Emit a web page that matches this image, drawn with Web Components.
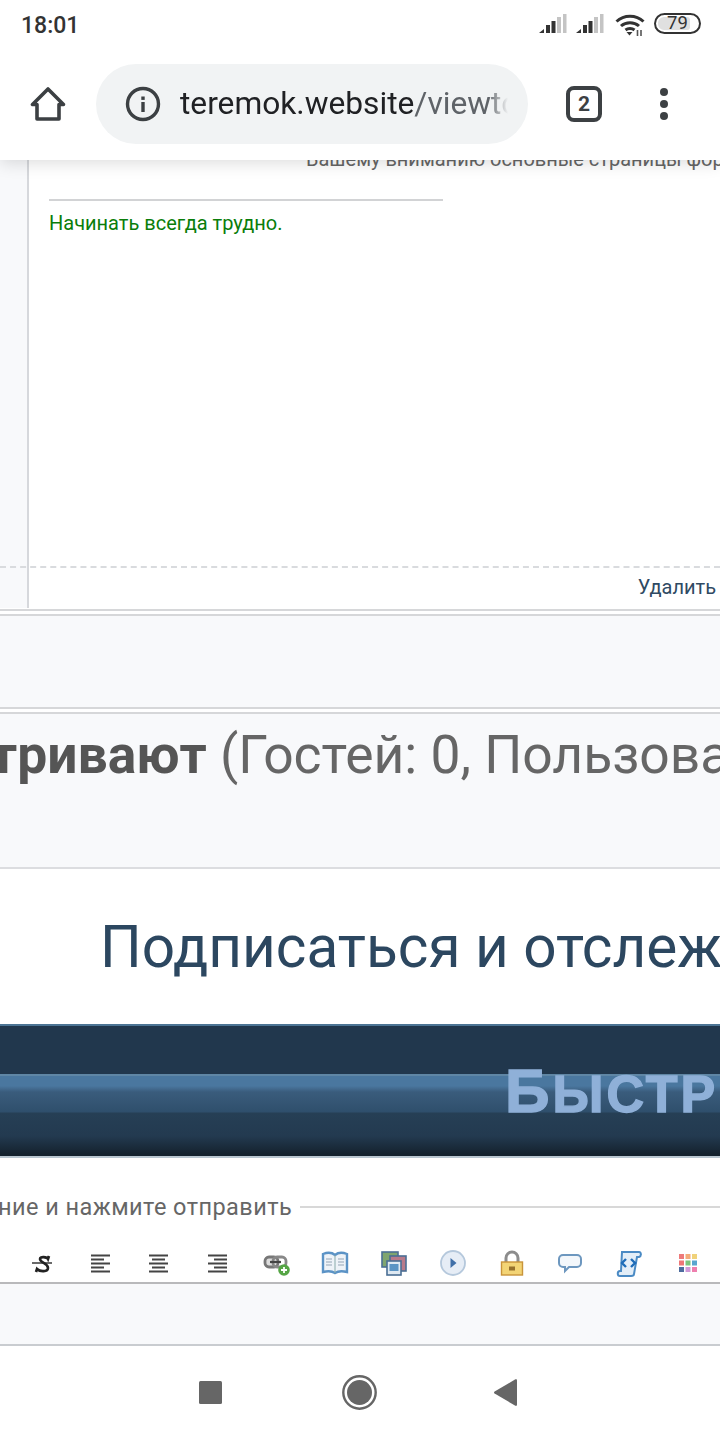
<!DOCTYPE html>
<html lang="ru">
<head>
<meta charset="utf-8">
<title>teremok.website</title>
<style>
  html, body { margin: 0; padding: 0; background: #fff; }
  body { width: 720px; height: 1440px; overflow: hidden; font-family: Roboto, "Liberation Sans", sans-serif; display: flex; flex-direction: column; }
</style>
</head>
<body>
<status-bar></status-bar>
<browser-bar></browser-bar>
<post-panel></post-panel>
<stats-band></stats-band>
<subscribe-row></subscribe-row>
<quick-banner>Быстр</quick-banner>
<editor-box></editor-box>
<nav-bar></nav-bar>

<script>
// small helper, every element just sets its shadow html once
class Base extends HTMLElement {
  constructor() {
    super();
    this.attachShadow({ mode: 'open' });
  }
  connectedCallback() {
    this.shadowRoot.innerHTML = this.markup();
  }
}

const signal = `
  <svg width="28" height="19" viewBox="0 0 28 19" style="margin-top:-3px">
    <path d="M0 19l5-4v4z" fill="#333"/>
    <rect x="7" y="11" width="4" height="8" fill="#333"/>
    <rect x="12.500" y="7" width="4" height="12" fill="#333"/>
    <rect x="18" y="3" width="4" height="16" fill="#c4c4c4"/>
    <rect x="24" y="0" width="3.500" height="19" fill="#c4c4c4"/>
  </svg>`;

class StatusBar extends Base {
  markup() {
    return `<style>
      :host { display: flex; align-items: center; height: 50px; padding: 0 19px 0 21px; flex: none; background: #fff; }
      .time { font: 500 23px/1 Roboto, sans-serif; color: #333; margin-top: 1px; }
      .icons { margin-left: auto; display: flex; align-items: center; gap: 9px; }
      .batt { width: 47px; height: 21px; box-sizing: border-box; border: 2px solid #333; border-radius: 11px; padding: 2px; position: relative; margin: -3px 0 0 0; }
      .fill { background: #e0e0e0; height: 100%; width: 82%; border-radius: 6px 3px 3px 6px; }
      .batt span { position: absolute; inset: 0; text-align: center; font: 400 18.500px/17px Roboto, sans-serif; color: #333; }
    </style>
    <div class="time">18:01</div>
    <div class="icons">
      ${signal}${signal}
      <svg width="30" height="24" viewBox="0 0 30 24" style="margin-left:2px">
        <g fill="none" stroke="#333" stroke-width="3">
          <path d="M1.500 8.500c7.500-7 19.500-7 27 0"/>
          <path d="M6 13c5-4.500 13-4.500 18 0"/>
          <path d="M10.500 17c2.500-2 6.500-2 9 0"/>
        </g>
        <path d="M11.500 19h6l-3 3.500z" fill="#333"/>
        <path d="M22.500 17v6M26 17v6" stroke="#555" stroke-width="1.600"/>
      </svg>
      <div class="batt"><div class="fill"></div><span>79</span></div>
    </div>`;
  }
}

class BrowserBar extends Base {
  markup() {
    return `<style>
      :host { display: flex; align-items: center; height: 110px; flex: none; background: #fff; position: relative; z-index: 2; box-shadow: 0 3px 16px rgba(0,0,0,.14); clip-path: inset(0 0 -30px 0); }
      .home { width: 36px; height: 36px; margin: -2px 0 0 30px; flex: none; }
      .pill { width: 432px; height: 80px; margin-left: 30px; margin-top: -2px; border-radius: 40px; background: #f1f3f4; display: flex; align-items: center; flex: none; box-sizing: border-box; padding: 0 20px 0 29px; }
      .url { font: 400 31.700px/1 Roboto, sans-serif; color: #202124; margin-left: 19px; white-space: nowrap; overflow: hidden; flex: 1; -webkit-mask-image: linear-gradient(90deg, #000 94%, transparent); mask-image: linear-gradient(90deg, #000 94%, transparent); }
      .url span { color: #5f6368; }
      .tabs { width: 36px; height: 36px; box-sizing: border-box; border: 4px solid #3c4043; border-radius: 8px; margin-left: 38px; margin-top: -2px; flex: none; display: flex; align-items: center; justify-content: center; font: 700 21px/1 Roboto, sans-serif; color: #3c4043; }
      .dots { margin-left: 58px; margin-top: -2px; display: flex; flex-direction: column; gap: 4px; flex: none; }
      .dots i { width: 8px; height: 8px; border-radius: 50%; background: #3c4043; display: block; }
    </style>
    <svg class="home" viewBox="0 0 36 36" fill="none" stroke="#3c4043" stroke-width="3.600" stroke-linejoin="round">
      <path d="M18 3 2.500 18.500H7V33h22V18.500h4.500z"/>
    </svg>
    <div class="pill">
      <svg width="36" height="36" viewBox="0 0 36 36" style="flex:none">
        <circle cx="18" cy="18" r="15.500" fill="none" stroke="#3c4043" stroke-width="3.400"/>
        <rect x="16.300" y="16" width="3.400" height="10" fill="#3c4043"/>
        <rect x="16.300" y="10.500" width="3.400" height="3.400" fill="#3c4043"/>
      </svg>
      <div class="url">teremok.website<span>/viewtopic.php</span></div>
    </div>
    <div class="tabs">2</div>
    <div class="dots"><i></i><i></i><i></i></div>`;
  }
}

class PostPanel extends Base {
  markup() {
    return `<style>
      :host { display: grid; grid-template-columns: 29px minmax(0, 1fr); grid-template-rows: 408px 40px; flex: none; background: #fff; font-family: Roboto, sans-serif; overflow: hidden; }
      .side { background: #f8f9fb; border-right: 2px solid #d6d8dc; grid-row: 1 / 3; grid-column: 1; }
      .dash { grid-row: 1; grid-column: 1 / -1; align-self: end; border-bottom: 2px dashed #d9dbde; }
      .body { grid-row: 1; grid-column: 2; padding-left: 20px; }
      .cut { margin: -12px 0 0 257px; font-size: 20px; line-height: 22px; color: #666; white-space: nowrap; height: 22px; }
      hr { width: 394px; margin: 29px 0 0; border: 0; border-top: 2px solid #d2d3d5; }
      .green { color: #0a7d0a; font-size: 20px; line-height: 22px; margin-top: 11px; }
      .foot { grid-row: 2; grid-column: 2; text-align: right; padding-right: 4px; font-size: 20px; line-height: 38px; color: #2f4a63; }
    </style>
    <div class="side"></div>
    <div class="dash"></div>
    <div class="body">
      <div class="cut">Вашему вниманию основные страницы форума</div>
      <hr>
      <div class="green">Начинать всегда трудно.</div>
    </div>
    <div class="foot">Удалить</div>`;
  }
}

class StatsBand extends Base {
  markup() {
    return `<style>
      :host { display: block; flex: none; background: #f8f9fb; font-family: Roboto, sans-serif; overflow: hidden; }
      .rule { height: 2px; background: #d6d7d9; }
      .gap { height: 3px; background: #fff; }
      .gap.thin { height: 1px; }
      .empty { height: 91px; }
      .text { height: 155px; box-sizing: border-box; border-bottom: 2px solid #dcdde0; font-size: 53.400px; line-height: 62px; color: #666; white-space: nowrap; margin-left: -10px; padding-top: 10px; }
      b { color: #555; }
    </style>
    <div class="gap thin"></div><div class="rule"></div><div class="gap"></div><div class="rule"></div>
    <div class="empty"></div>
    <div class="rule"></div><div class="gap"></div><div class="rule"></div>
    <div class="text"><b>тривают</b> (Гостей: 0, Пользователей: 0)</div>`;
  }
}

class SubscribeRow extends Base {
  markup() {
    return `<style>
      :host { display: block; height: 155px; flex: none; background: #fff; overflow: hidden; }
      div { font: 400 58.500px/66px Roboto, sans-serif; color: #2c4760; white-space: nowrap; padding: 45px 0 0 100px; }
    </style>
    <div>Подписаться и отслеживать</div>`;
  }
}

class QuickBanner extends Base {
  markup() {
    return `<style>
      :host { display: block; height: 134px; flex: none; box-sizing: border-box; overflow: hidden;
        border-top: 2px solid #4c7494; border-bottom: 2px solid #b9c6d0;
        background: linear-gradient(#21374d 0, #21374d 48px, #5f86a5 48px, #5f86a5 50px, #4a779f 50px, #4a779f 60px, #3a5c7c 66px, #2f4f6c 86px, #263f55 87px, #233a50 110px, #15222e 128px, #15222e 130px); }
      div { padding: 34px 0 0 505px; font: 700 52px/1 "Liberation Sans", Arial, sans-serif; letter-spacing: 3px; text-transform: uppercase; color: #8fb0d8; -webkit-text-stroke: 1.400px #8fb0d8; white-space: nowrap; }
      div::first-letter { font-size: 62px; }
    </style>
    <div><slot></slot></div>`;
  }
}

class EditorBox extends Base {
  markup() {
    return `<style>
      :host { display: block; height: 188px; flex: none; background: #fff; font-family: Roboto, sans-serif; overflow: hidden; }
      .legend { display: flex; align-items: center; height: 26px; margin-top: 36px; color: #666; font-size: 23.500px; letter-spacing: .45px; white-space: nowrap; }
      .legend i { flex: 1; height: 2px; background: #d8d8d8; margin-left: 8px; margin-top: 0; }
      .legend span { flex: none; margin-left: -2px; }
      .tools { height: 64px; display: flex; align-items: center; box-sizing: border-box; padding: 24px 0 0 28px; border-bottom: 2px solid #b9b9bb; }
      .tools svg { width: 28px; height: 28px; flex: none; margin-right: 30.700px; filter: blur(.5px); }
      .area { height: 60px; background: #f8f9fb; border-bottom: 2px solid #c9ccd0; }
    </style>
    <div class="legend"><span>ние и нажмите отправить</span><i></i></div>
    <div class="tools">
      <svg viewBox="0 0 28 28"><path d="M4 14h20" stroke="#444" stroke-width="1.600"/><path d="M21 7l-1 3c-1-2-8-3-8 0 0 4 8 4 8 9 0 4-8 4-11 1l-1 3" fill="none" stroke="#222" stroke-width="2.600"/></svg>
      <svg viewBox="0 0 28 28"><path d="M4 6.500h19M4 10.500h13M4 14.500h19M4 18.500h13M4 22.500h19" stroke="#444" stroke-width="2"/></svg>
      <svg viewBox="0 0 28 28"><path d="M4 6.500h19M7 10.500h13M4 14.500h19M7 18.500h13M4 22.500h19" stroke="#444" stroke-width="2"/></svg>
      <svg viewBox="0 0 28 28"><path d="M4 6.500h19M10 10.500h13M4 14.500h19M10 18.500h13M4 22.500h19" stroke="#444" stroke-width="2"/></svg>
      <svg viewBox="0 0 28 28"><rect x="2" y="8" width="13" height="10" rx="4" fill="#ddd" stroke="#777" stroke-width="2.800"/><rect x="10" y="8" width="13" height="10" rx="4" fill="none" stroke="#888" stroke-width="2.800"/><path d="M7 13h11" stroke="#444" stroke-width="2.200"/><circle cx="21" cy="21" r="5.800" fill="#55a545"/><path d="M21 18v6M18 21h6" stroke="#fff" stroke-width="1.800"/></svg>
      <svg viewBox="0 0 28 28"><path d="M2 5c4-1.500 9-1.500 12 1 3-2.500 8-2.500 12-1v18c-4-1-9-1-12 1-3-2-8-2-12-1z" fill="#eef3f8" stroke="#5b93c6" stroke-width="2.400"/><path d="M14 6v18" stroke="#8aa" stroke-width="1"/><path d="M5 10h6M5 13h6M5 16h6M17 10h6M17 13h6M17 16h6" stroke="#b3c0cb" stroke-width="1.500"/></svg>
      <svg viewBox="0 0 28 28"><rect x="2" y="3" width="16" height="15" fill="#7fa56f" stroke="#4a6e94" stroke-width="1.600"/><rect x="10" y="7" width="16" height="15" fill="#b87a8a" stroke="#4a6e94" stroke-width="1.600"/><rect x="7" y="12" width="14" height="14" fill="#dfe9f2" stroke="#4a6e94" stroke-width="1.600"/><rect x="9.500" y="15" width="9" height="7" fill="#5b94c4"/></svg>
      <svg viewBox="0 0 28 28"><circle cx="14" cy="14" r="12" fill="#e6edf6" stroke="#b5c8dc" stroke-width="1.800"/><path d="M11.500 9 17.500 14 11.500 19z" fill="#3f6fa8"/></svg>
      <svg viewBox="0 0 28 28"><path d="M8 14V9a6 6 0 0 1 12 0v5" fill="none" stroke="#8c8c8c" stroke-width="3"/><rect x="3.500" y="13" width="21" height="13" fill="#f3d475" stroke="#c9943a" stroke-width="1.400"/><rect x="11" y="17.500" width="6" height="4" fill="#96702c"/></svg>
      <svg viewBox="0 0 28 28"><path d="M7 6h14a4 4 0 0 1 4 4v4a4 4 0 0 1-4 4h-8l-4 4v-4H7a4 4 0 0 1-4-4v-4a4 4 0 0 1 4-4z" fill="#f3f7fb" stroke="#6d97bf" stroke-width="2"/></svg>
      <svg viewBox="0 0 28 28"><path d="M7 3h17c2 0 3 4 0 5h-2l-3 17c0 1.500-2 2-3 2H5c-3 0-3-5 0-5h1z" fill="#e3eef8" stroke="#4a8ac4" stroke-width="2"/><path d="M11 10 7 14l4 4M16 10l4 4-4 4" fill="none" stroke="#1e6cb8" stroke-width="2.400"/></svg>
      <svg viewBox="0 0 28 28">
        <rect x="5" y="5" width="5" height="5" fill="#ee7a7a"/><rect x="11.500" y="5" width="5" height="5" fill="#f3ac7a"/><rect x="18" y="5" width="5" height="5" fill="#f0d27a"/>
        <rect x="5" y="11.500" width="5" height="5" fill="#e77"/><rect x="11.500" y="11.500" width="5" height="5" fill="#7cc47c"/><rect x="18" y="11.500" width="5" height="5" fill="#59a6cf"/>
        <rect x="5" y="18" width="5" height="5" fill="#4d6c9e"/><rect x="11.500" y="18" width="5" height="5" fill="#cf9ad8"/><rect x="18" y="18" width="5" height="5" fill="#ee7fae"/>
      </svg>
    </div>
    <div class="area"></div>`;
  }
}

class NavBar extends Base {
  markup() {
    return `<style>
      :host { display: flex; height: 94px; flex: none; background: #fff; align-items: center; box-sizing: border-box; padding-left: 199px; }
      svg { flex: none; display: block; margin-top: -1px; }
    </style>
    <svg width="23" height="23" viewBox="0 0 23 23" style="margin-right:120px"><rect width="23" height="23" rx="1.500" fill="#666"/></svg>
    <svg width="35" height="35" viewBox="0 0 35 35" style="margin-right:117px"><circle cx="17.500" cy="17.500" r="16.200" fill="none" stroke="#666" stroke-width="2.400"/><circle cx="17.500" cy="17.500" r="12.500" fill="#666"/></svg>
    <svg width="23" height="27" viewBox="0 0 23 27"><path d="M23 1.200v24.600c0 .9-.8 1.400-1.600 1L.6 14.400c-.8-.5-.8-1.400 0-1.900L21.400.3c.8-.4 1.600.1 1.600.9z" fill="#666"/></svg>`;
  }
}

customElements.define('status-bar', StatusBar);
customElements.define('browser-bar', BrowserBar);
customElements.define('post-panel', PostPanel);
customElements.define('stats-band', StatsBand);
customElements.define('subscribe-row', SubscribeRow);
customElements.define('quick-banner', QuickBanner);
customElements.define('editor-box', EditorBox);
customElements.define('nav-bar', NavBar);
</script>
</body>
</html>
